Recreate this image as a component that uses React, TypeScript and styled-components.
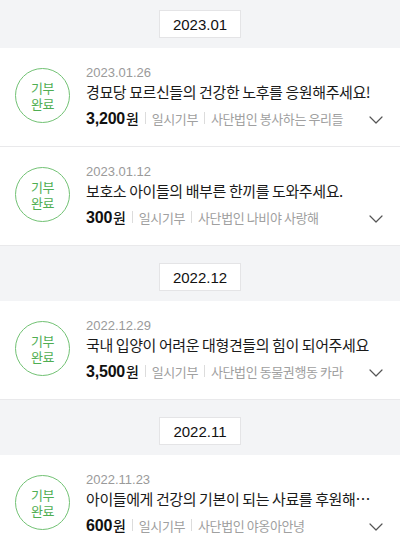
import React from "react";
import styled, {createGlobalStyle} from "styled-components";

type Donation = {
    id: number
    date: string
    title: string
    amount: string
    kind: string
    org: string
}

type Group = {
    month: string
    items: Donation[]
}

const groups: Group[] = [
    {
        month: "2023.01",
        items: [
            {id: 1, date: "2023.01.26", title: "경묘당 묘르신들의 건강한 노후를 응원해주세요!", amount: "3,200", kind: "일시기부", org: "사단법인 봉사하는 우리들"},
            {id: 2, date: "2023.01.12", title: "보호소 아이들의 배부른 한끼를 도와주세요.", amount: "300", kind: "일시기부", org: "사단법인 나비야 사랑해"},
        ],
    },
    {
        month: "2022.12",
        items: [
            {id: 3, date: "2022.12.29", title: "국내 입양이 어려운 대형견들의 힘이 되어주세요", amount: "3,500", kind: "일시기부", org: "사단법인 동물권행동 카라"},
        ],
    },
    {
        month: "2022.11",
        items: [
            {id: 4, date: "2022.11.23", title: "아이들에게 건강의 기본이 되는 사료를 후원해주세요", amount: "600", kind: "일시기부", org: "사단법인 야옹아안녕"},
        ],
    },
]

const GlobalStyle = createGlobalStyle`
  html, body {
    margin: 0;
    padding: 0;
    background: #f3f4f6;
    font-family: "Liberation Sans", "Noto Sans CJK KR", sans-serif;
  }
`

const Chevron = () => (
    <svg width="14" height="8" viewBox="0 0 14 8" fill="none">
        <path d="M1 1l6 6 6-6" stroke="#555" strokeWidth="1.2" strokeLinecap="round" strokeLinejoin="round"/>
    </svg>
)

const DonationCard = ({item}: { item: Donation }) => {
    return (
        <Card>
            <DoneCircle>
                <span>기부</span>
                <span>완료</span>
            </DoneCircle>
            <Info>
                <DateText>{item.date}</DateText>
                <Title>{item.title}</Title>
                <BottomRow>
                    <Amount>{item.amount}<Won>원</Won></Amount>
                    <Meta>{item.kind}</Meta>
                    <Meta>{item.org}</Meta>
                    <Arrow><Chevron/></Arrow>
                </BottomRow>
            </Info>
        </Card>
    )
}

export default function App() {
    return (
        <Page>
            <GlobalStyle/>
            {groups.map((g, index) => (
                <section key={g.month}>
                    <MonthBar first={index === 0}>
                        <MonthTag>{g.month}</MonthTag>
                    </MonthBar>
                    {g.items.map(el => <DonationCard key={el.id} item={el}/>)}
                </section>
            ))}
        </Page>
    )
}

const Page = styled.div`
  width: 400px;
  background: #f3f4f6;
`

const MonthBar = styled.div<{ first?: boolean }>`
  display: flex;
  justify-content: center;
  padding: ${p => p.first ? "10px" : "17px"} 0 10px;
`

const MonthTag = styled.div`
  width: 80px;
  height: 26px;
  display: flex;
  align-items: center;
  justify-content: center;
  background: #fff;
  border: 1px solid #e4e4e6;
  font-size: 15px;
  color: #111;
`

const Card = styled.div`
  display: flex;
  align-items: flex-start;
  gap: 16px;
  height: 82px;
  padding: 16px 17px 0 15px;
  background: #fff;
  border-bottom: 1px solid #e9e9eb;
`

const DoneCircle = styled.div`
  flex: 0 0 auto;
  width: 53px;
  height: 53px;
  margin-top: 4px;
  border: 1px solid #72c274;
  border-radius: 50%;
  display: flex;
  flex-direction: column;
  align-items: center;
  justify-content: center;
  color: #4fae52;
  font-family: "Noto Sans CJK KR", sans-serif;
  font-size: 13px;
  line-height: 16px;
  letter-spacing: -0.5px;

  span {
    display: block;
  }
`

const Info = styled.div`
  flex: 1;
  min-width: 0;
  display: flex;
  flex-direction: column;
`

const DateText = styled.div`
  font-size: 13px;
  line-height: 18px;
  color: #9a9a9a;
`

const Title = styled.div`
  font-family: "Noto Sans CJK KR", sans-serif;
  font-size: 15px;
  line-height: 20px;
  letter-spacing: -0.4px;
  color: #1a1a1a;
  padding-right: 12px;
  white-space: nowrap;
  overflow: hidden;
  text-overflow: ellipsis;
`

const BottomRow = styled.div`
  display: flex;
  align-items: center;
  margin-top: 5px;
  height: 22px;
`

const Amount = styled.div`
  font-size: 16px;
  font-weight: bold;
  color: #111;
  letter-spacing: -0.2px;
`

const Won = styled.span`
  font-family: "Noto Sans CJK KR", sans-serif;
  font-size: 14px;
  font-weight: 500;
  margin-left: 1px;
`

const Meta = styled.div`
  display: flex;
  align-items: center;
  font-family: "Noto Sans CJK KR", sans-serif;
  font-size: 13px;
  letter-spacing: -0.4px;
  color: #a0a0a0;
  white-space: nowrap;

  &::before {
    content: "";
    display: block;
    width: 1px;
    height: 12px;
    background: #dcdcdc;
    margin: 0 6px 0 6px;
  }
`

const Arrow = styled.div`
  margin-left: auto;
  display: flex;
  margin-top: 4px;
`
